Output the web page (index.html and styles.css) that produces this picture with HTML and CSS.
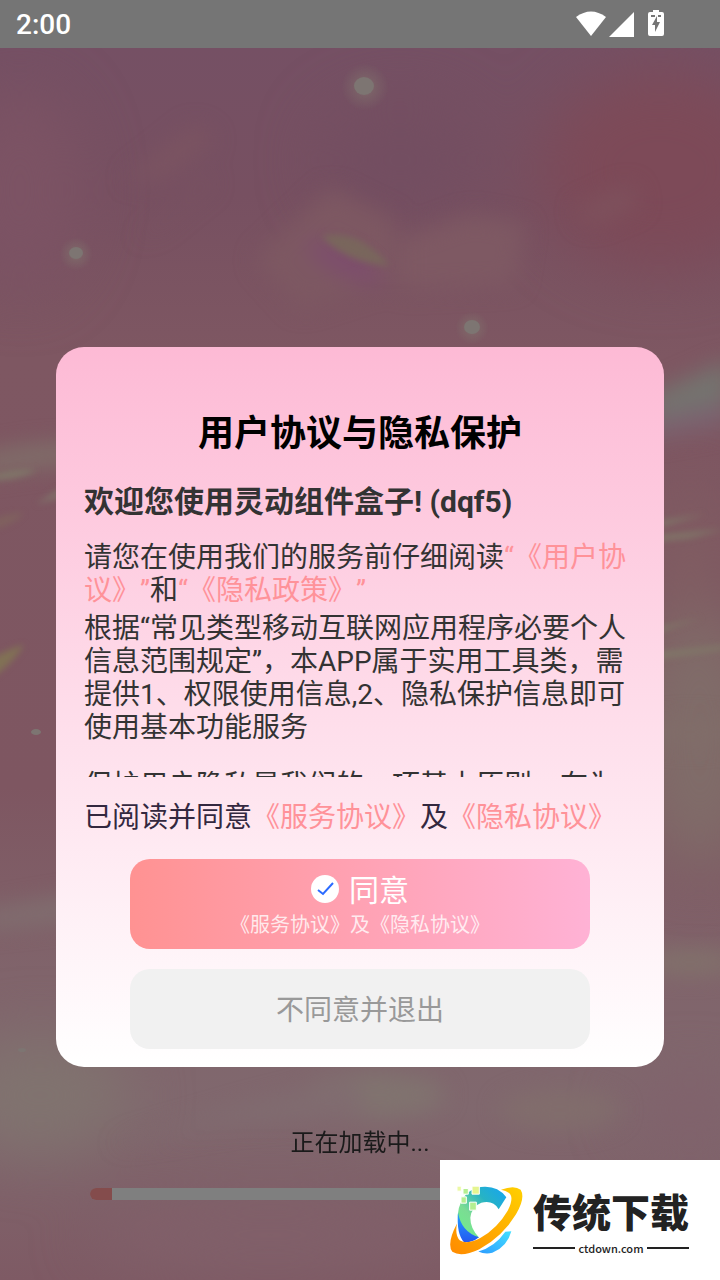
FILE: index.html
```html
<!DOCTYPE html>
<html lang="zh-CN">
<head>
    <meta charset="UTF-8">
    <meta name="viewport" content="width=device-width, initial-scale=1.0">
    <title>用户协议与隐私保护</title>
    <link rel="stylesheet" href="styles.css">
</head>
<body>
    <header class="status-bar">
        <span class="clock">2:00</span>
        <svg class="status-icons" viewBox="0 0 90 28" aria-hidden="true">
            <path d="M0 7Q15-4 30 7L15 26Z" fill="#fff"/>
            <path d="M58 2V27H33Z" fill="#fff"/>
            <path d="M77 0H83V2H86Q88 2 88 4V24Q88 26 86 26H74Q72 26 72 24V4Q72 2 74 2H77Z" fill="#fff"/>
            <path d="M75 5H79V7H75ZM82 5H85V7H82ZM81 6L76 15H79V22L84 12H81Z" fill="#757575"/>
        </svg>
    </header>

    <main class="screen">
        <svg class="backdrop" viewBox="0 48 720 1232" preserveAspectRatio="none" aria-hidden="true">
            <defs>
                <linearGradient id="base" x1="0" y1="0" x2="0" y2="1">
                    <stop offset="0" stop-color="#755064"/>
                    <stop offset=".12" stop-color="#775061"/>
                    <stop offset=".25" stop-color="#7e5762"/>
                    <stop offset=".6" stop-color="#7e5661"/>
                    <stop offset=".75" stop-color="#80646b"/>
                    <stop offset=".86" stop-color="#80686e"/>
                    <stop offset="1" stop-color="#7e5a64"/>
                </linearGradient>
                <filter id="soft" x="-80%" y="-80%" width="260%" height="260%" color-interpolation-filters="sRGB"><feGaussianBlur stdDeviation="30"/></filter>
                <filter id="mid" x="-50%" y="-50%" width="200%" height="200%" color-interpolation-filters="sRGB"><feGaussianBlur stdDeviation="11"/></filter>
                <filter id="fine" x="-50%" y="-50%" width="200%" height="200%" color-interpolation-filters="sRGB"><feGaussianBlur stdDeviation="3"/></filter>
                <radialGradient id="glow">
                    <stop offset="0" stop-color="#80706c"/>
                    <stop offset=".4" stop-color="#80706c" stop-opacity=".5"/>
                    <stop offset="1" stop-color="#80706c" stop-opacity="0"/>
                </radialGradient>
            </defs>
            <rect y="48" width="720" height="1232" fill="url(#base)"/>
            <g filter="url(#soft)">
                <ellipse cx="660" cy="170" rx="120" ry="100" fill="#7d4a58"/>
                <ellipse cx="400" cy="160" rx="80" ry="60" fill="#734e61"/>
                <ellipse cx="20" cy="190" rx="60" ry="100" fill="#7c5364"/>
                <ellipse cx="690" cy="600" rx="40" ry="120" fill="#805d62"/>
                <ellipse cx="700" cy="740" rx="70" ry="130" fill="#806c69"/>
                <ellipse cx="40" cy="1095" rx="90" ry="60" fill="#80736f"/>
                <ellipse cx="690" cy="1110" rx="60" ry="30" fill="#80606b"/>
                <ellipse cx="270" cy="1235" rx="180" ry="35" fill="#81606a"/>
            </g>
            <g filter="url(#mid)">
                <path d="M255 260L330 188L395 220V280L300 310Z" fill="#7d5862"/>
                <path d="M135 240L185 200L205 170L215 185L160 230Z" fill="#7b5461" opacity=".4"/>
                <path d="M125 180L195 125L215 140L160 180Z" fill="#7b5461"/>
                <path d="M400 240L470 215L525 225L515 285L400 290Z" fill="#7e5963"/>
                <path d="M575 210L630 185L640 205L590 225Z" fill="#7e525d"/>
                <ellipse cx="345" cy="262" rx="42" ry="12" transform="rotate(25 345 262)" fill="#7d4c6e"/>
                <path d="M-20 455Q45 440 90 445V460L-20 475Z" fill="#80706a"/>
                <path d="M650 395L730 360V400L650 420Z" fill="#74746f"/>
                <path d="M650 420L730 400V425L650 440Z" fill="#7b6370"/>
                <path d="M-20 912L80 895V920L-20 930Z" fill="#806f70"/>
                <ellipse cx="375" cy="1095" rx="70" ry="22" fill="#80736f"/>
                <path d="M110 1145L250 1105L350 1080L370 1110L230 1125Z" fill="#806c70"/>
                <ellipse cx="560" cy="1110" rx="60" ry="20" fill="#816d6c"/>
                <ellipse cx="690" cy="732" rx="50" ry="12" fill="#806d69"/>
                <ellipse cx="690" cy="962" rx="50" ry="12" fill="#81726b"/>
            </g>
            <g filter="url(#fine)">
                <path d="M322 236Q358 228 390 266Q345 262 322 236Z" fill="#79665c"/>
                <path d="M-8 475Q24 468 36 470Q24 478-8 480Z" fill="#807869"/>
                <path d="M-8 520Q14 511 24 513Q14 525-8 530Z" fill="#81705a" opacity=".4"/>
                <path d="M-8 658Q13 647 24 645Q14 662-8 678Z" fill="#817155"/>
                <path d="M36 504L60 488V498Z" fill="#807069"/>
                <path d="M660 521L705 514L660 527Z" fill="#807668"/>
                <path d="M650 536L725 529L690 538L650 542Z" fill="#807668"/>
                <path d="M655 628L702 618L655 634Z" fill="#807668"/>
                <path d="M655 652L724 645V650L655 660Z" fill="#807668"/>
            </g>
            <g fill="url(#glow)">
                <circle cx="365" cy="87" r="24"/>
                <circle cx="76" cy="254" r="17"/>
                <circle cx="472" cy="328" r="17"/>
            </g>
            <g fill="#7d7572">
                <ellipse cx="364" cy="86" rx="10" ry="9"/>
                <ellipse cx="76" cy="253" rx="7" ry="6"/>
                <ellipse cx="472" cy="327" rx="8" ry="7"/>
                <ellipse cx="36" cy="732" rx="5" ry="3"/>
                <ellipse cx="22" cy="1050" rx="4" ry="2"/>
            </g>
        </svg>

        <section class="dialog" role="dialog" aria-labelledby="dialog-title">
            <h1 class="dialog-title" id="dialog-title">用户协议与隐私保护</h1>
            <div class="agreement">
                <h2 class="welcome">欢迎您使用灵动组件盒子! (dqf5)</h2>
                <p class="intro">请您在使用我们的服务前仔细阅读<a href="#">“《用户协议》”</a>和<a href="#">“《隐私政策》”</a></p>
                <p class="rules">根据“常见类型移动互联网应用程序必要个人信息范围规定”，本APP属于实用工具类，需提供1、权限使用信息,2、隐私保护信息即可使用基本功能服务</p>
                <p class="rules">保护用户隐私是我们的一项基本原则，在为</p>
            </div>
            <p class="consent">已阅读并同意<a href="#">《服务协议》</a>及<a href="#">《隐私协议》</a></p>
            <div class="actions">
                <button type="button" class="btn agree">
                    <span class="agree-label">
                        <svg class="check" viewBox="0 0 28 28" aria-hidden="true">
                            <circle cx="14" cy="14" r="14" fill="#fff"/>
                            <path d="M7 15L12 19L22 8" fill="none" stroke="#2b6bff" stroke-width="2"/>
                        </svg>
                        同意
                    </span>
                    <span class="agree-note">《服务协议》及《隐私协议》</span>
                </button>
                <button type="button" class="btn decline">不同意并退出</button>
            </div>
        </section>

        <div class="loading">
            <p class="loading-text" id="loading-text">正在加载中...</p>
            <div class="progress" role="progressbar" aria-labelledby="loading-text" aria-valuenow="4" aria-valuemin="0" aria-valuemax="100">
                <div class="progress-fill" style="width: 4%"></div>
            </div>
        </div>

        <aside class="badge">
            <svg class="badge-logo" viewBox="28 74 222 212" aria-hidden="true">
                <defs>
                    <linearGradient id="orange" x1="1" y1="0" x2="0" y2="1">
                        <stop offset="0" stop-color="#ffd000"/>
                        <stop offset="1" stop-color="#ff8a00"/>
                    </linearGradient>
                    <linearGradient id="teal" x1="0" y1="1" x2="1" y2="0">
                        <stop offset="0" stop-color="#6cf08c"/>
                        <stop offset=".35" stop-color="#7bdc93"/>
                        <stop offset=".65" stop-color="#27b3c4"/>
                        <stop offset="1" stop-color="#16a4f3"/>
                    </linearGradient>
                    <linearGradient id="blue" x1="0" y1="0" x2="0" y2="1">
                        <stop offset="0" stop-color="#22a0ff"/>
                        <stop offset="1" stop-color="#2457f0"/>
                    </linearGradient>
                    <linearGradient id="sky" x1="0" y1="1" x2="1" y2="0">
                        <stop offset="0" stop-color="#2d9cff"/>
                        <stop offset="1" stop-color="#43e0ff"/>
                    </linearGradient>
                </defs>
                <path d="M200 110Q175 78 135 79Q88 80 65 122Q45 165 62 202Q80 235 118 231Q92 205 92 172Q96 138 125 127Q160 118 177 146Z" fill="url(#teal)"/>
                <path d="M55 156Q50 220 73 245Q95 248 118 230Q65 215 55 156Z" fill="url(#blue)"/>
                <path d="M116 273Q165 260 197 214L215 212Q203 258 158 277Q135 282 116 273Z" fill="url(#sky)"/>
                <path d="M184 88Q224 72 243 88Q258 112 229 161Q188 229 119 266Q65 292 38 274Q20 250 52 189Q45 226 61 240Q84 253 123 232Q173 204 204 151Q225 109 207 97Q199 91 184 88Z" fill="url(#orange)"/>
                <g stroke="#fff" stroke-width="3">
                    <path d="M97 77H119V101H97Z" fill="#e5f58f"/>
                    <path d="M70 84H86V101H70ZM64 109H80V128H64ZM90 125H110V149H90Z" fill="#b5ef91"/>
                    <path d="M52 77H65V92H52Z" fill="#ecf9a5"/>
                </g>
            </svg>
            <div class="badge-text">
                <strong class="badge-name">传统下载</strong>
                <span class="badge-site">ctdown.com</span>
            </div>
        </aside>
    </main>
</body>
</html>
```
FILE: styles.css
```css
* {
    box-sizing: border-box;
}
html, body {
    margin: 0;
    height: 100%;
}
body {
    display: flex;
    flex-direction: column;
    overflow: hidden;
    font-family: Roboto, "Noto Sans CJK SC", sans-serif;
    text-spacing-trim: space-all;
    color: #333;
}
h1, h2, p {
    margin: 0;
}
a {
    color: #ff9299;
    text-decoration: none;
}
.status-bar {
    flex: none;
    display: flex;
    align-items: center;
    justify-content: space-between;
    height: 48px;
    padding: 0 54px 0 16px;
    background: #757575;
    color: #fff;
}
.clock {
    padding-top: 2px;
    font-size: 28px;
    font-weight: 500;
    line-height: 48px;
}
.status-icons {
    width: 90px;
    height: 28px;
}
.screen {
    flex: 1;
    position: relative;
    display: flex;
    flex-direction: column;
    padding: 299px 56px 0;
    background: #7e5661;
}
.backdrop {
    position: absolute;
    top: 0;
    left: 0;
    width: 100%;
    height: 100%;
}

/* agreement dialog */
.dialog {
    position: relative;
    padding: 65px 28px 18px;
    border-radius: 28px;
    background: linear-gradient(#fdbad5, #fff);
}
.dialog-title {
    font-size: 36px;
    line-height: 44px;
    font-weight: 700;
    text-align: center;
    color: #000;
}
.agreement {
    height: 299px;
    margin-top: 22px;
    overflow: hidden;
    font-size: 28px;
    line-height: 33px;
}
.welcome {
    margin-bottom: 15px;
    font-size: 30px;
    line-height: 48px;
    font-weight: 700;
}
.intro {
    margin-bottom: 5px;
}
.rules {
    margin-bottom: 25px;
}
.consent {
    margin-top: 23px;
    font-size: 28px;
    line-height: 36px;
    color: #33283f;
}
.actions {
    display: flex;
    flex-direction: column;
    gap: 20px;
    margin: 23px 46px 0;
}
.btn {
    padding: 0;
    border: 0;
    border-radius: 20px;
    font-family: inherit;
    font-size: 28px;
    text-spacing-trim: inherit;
}
.agree {
    display: flex;
    flex-direction: column;
    align-items: center;
    justify-content: center;
    height: 90px;
    padding-top: 5px;
    background: linear-gradient(to right, #ff9292, #ffb2d5);
    color: #fff;
}
.agree-label {
    display: flex;
    align-items: center;
    gap: 10px;
    font-size: 30px;
    line-height: 36px;
}
.check {
    width: 28px;
    height: 28px;
    margin-bottom: 4px;
}
.agree-note {
    font-size: 20px;
    line-height: 32px;
    color: rgba(255, 255, 255, 0.8);
}
.decline {
    height: 80px;
    padding-bottom: 2px;
    background: #f1f1f1;
    color: #999;
}

/* loading bar */
.loading {
    position: relative;
    margin-top: 61px;
    padding: 0 34px;
}
.loading-text {
    font-size: 24px;
    line-height: 30px;
    text-align: center;
    color: #1a1a1a;
}
.progress {
    height: 12px;
    margin-top: 30px;
    border-radius: 6px;
    overflow: hidden;
    background: #7f7f7f;
}
.progress-fill {
    height: 100%;
    background: #844c4c;
}

/* corner badge */
.badge {
    position: absolute;
    right: 0;
    bottom: 0;
    display: flex;
    align-items: center;
    gap: 10px;
    width: 280px;
    height: 120px;
    padding-left: 9px;
    background: #fff;
    color: #222;
}
.badge-logo {
    width: 74px;
    height: 71px;
}
.badge-text {
    width: 156px;
    padding-top: 4px;
}
.badge-name {
    display: block;
    font-size: 39px;
    line-height: 52px;
    font-weight: 900;
    white-space: nowrap;
}
.badge-site {
    display: flex;
    align-items: center;
    gap: 3px;
    font-family: "Noto Sans CJK SC", sans-serif;
    font-size: 11px;
    line-height: 16px;
    font-weight: 500;
}
.badge-site::before,
.badge-site::after {
    content: "";
    flex: 1;
    height: 2px;
    background: #222;
}
```
